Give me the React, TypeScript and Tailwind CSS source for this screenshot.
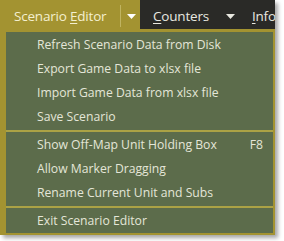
import React from "react";

const font = { fontFamily: '"Open Sans", "Noto Sans", sans-serif' };

function Caret({ className }: { className?: string }) {
  return (
    <svg width="9" height="5" viewBox="0 0 9 5" className={className}>
      <path d="M0 0 H9 L4.5 5 Z" fill="currentColor" />
    </svg>
  );
}

function Item({ label, shortcut }: { label: string; shortcut?: string }) {
  return (
    <div className="flex h-[24px] items-center justify-between pl-[31px] pr-[10px] text-[12.2px] text-[#e4e6d8]">
      <span className="whitespace-nowrap">{label}</span>
      {shortcut && <span>{shortcut}</span>}
    </div>
  );
}

function Separator() {
  return <div className="my-[1px] h-[2px] bg-[#aba245]" />;
}

export default function App() {
  return (
    <div className="h-[241px] w-[284px] bg-white" style={font}>
      <div className="flex w-[275px] flex-col bg-[#a39331] shadow-[3px_3px_4px_rgba(0,0,0,0.35)]">
        <div className="flex h-[29px]">
          <div className="flex w-[140px] items-center pl-[14px] pt-[3px] text-[13.5px] text-[#f4efcf]">
            <span className="whitespace-nowrap tracking-[-0.2px]">
              Scenario <span className="underline underline-offset-2">E</span>ditor
            </span>
            <div className="ml-[14px] h-[22px] w-[1px] shrink-0 bg-[#c0b461]" />
            <Caret className="ml-[6px] shrink-0 text-white" />
          </div>
          <div className="flex flex-1 items-center overflow-hidden bg-[#2a2a27] pl-[13px] pt-[3px] text-[13.5px] text-[#e8e8e0]">
            <span className="whitespace-nowrap tracking-[-0.2px]">
              <span className="underline underline-offset-2">C</span>ounters
            </span>
            <Caret className="ml-[17px] shrink-0 text-[#e8e8e0]" />
            <span className="ml-[17px] whitespace-nowrap tracking-[-0.2px]">
              <span className="underline underline-offset-2">I</span>nfo
            </span>
          </div>
        </div>
        <div className="pb-[2px] pl-[6px] pr-[2px] pt-[3px]">
          <div className="bg-[#5c6c4b] pt-[1px]">
            <Item label="Refresh Scenario Data from Disk" />
            <Item label="Export Game Data to xlsx file" />
            <Item label="Import Game Data from xlsx file" />
            <Item label="Save Scenario" />
            <Separator />
            <Item label="Show Off-Map Unit Holding Box" shortcut="F8" />
            <Item label="Allow Marker Dragging" />
            <Item label="Rename Current Unit and Subs" />
            <Separator />
            <Item label="Exit Scenario Editor" />
          </div>
        </div>
      </div>
    </div>
  );
}
